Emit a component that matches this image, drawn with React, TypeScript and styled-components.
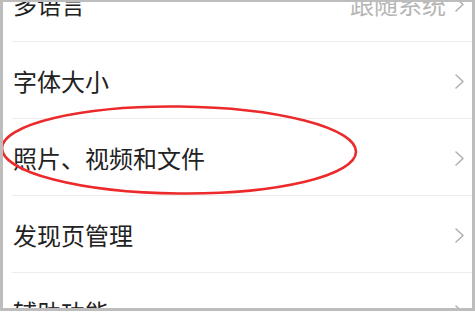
import React from "react";
import styled, { createGlobalStyle } from "styled-components";

const GlobalStyle = createGlobalStyle`
  html, body {
    margin: 0;
    padding: 0;
    background: #ffffff;
  }
  body {
    font-family: "Noto Sans CJK SC", "Noto Sans", sans-serif;
  }
`;

const Frame = styled.div`
  position: relative;
  box-sizing: border-box;
  width: 475px;
  height: 311px;
  border-style: solid;
  border-color: #bdbdbd;
  border-width: 2px 3px 3px 3px;
  overflow: hidden;
  background: #ffffff;
`;

const List = styled.div`
  display: flex;
  flex-direction: column;
  margin-top: -37px;
`;

const Row = styled.div`
  box-sizing: border-box;
  height: 77px;
  margin-left: 9px;
  padding: 2px 8px 0 1px;
  display: flex;
  align-items: center;
  border-bottom: 1px solid #ececec;
`;

const Label = styled.span`
  flex: 1;
  font-size: 24px;
  line-height: 1;
  color: #222222;
  white-space: nowrap;
`;

const Value = styled.span`
  font-size: 24px;
  line-height: 1;
  color: #b5b5b5;
  margin-right: 9px;
  white-space: nowrap;
`;

const ChevronSvg = styled.svg`
  flex: none;
  width: 9px;
  height: 15px;
`;

const Overlay = styled.svg`
  position: absolute;
  left: -3px;
  top: 0;
  pointer-events: none;
`;

const Chevron = () => (
  <ChevronSvg viewBox="0 0 9 15">
    <polyline
      points="1,1 8,7.5 1,14"
      fill="none"
      stroke="#b0b0b0"
      strokeWidth="1.5"
      strokeLinecap="round"
      strokeLinejoin="round"
    />
  </ChevronSvg>
);

const items: { label: string; value?: string }[] = [
  { label: "多语言", value: "跟随系统" },
  { label: "字体大小" },
  { label: "照片、视频和文件" },
  { label: "发现页管理" },
  { label: "辅助功能" },
];

export default function App() {
  return (
    <>
      <GlobalStyle />
      <Frame>
        <List>
          {items.map((it) => (
            <Row key={it.label}>
              <Label>{it.label}</Label>
              {it.value && <Value>{it.value}</Value>}
              <Chevron />
            </Row>
          ))}
        </List>
        <Overlay width="472" height="306" viewBox="0 0 472 306">
          <ellipse
            cx="179"
            cy="148"
            rx="177"
            ry="43.5"
            fill="none"
            stroke="#ec2a2c"
            strokeWidth="2.6"
            transform="rotate(0.6 179 148)"
          />
        </Overlay>
      </Frame>
    </>
  );
}
